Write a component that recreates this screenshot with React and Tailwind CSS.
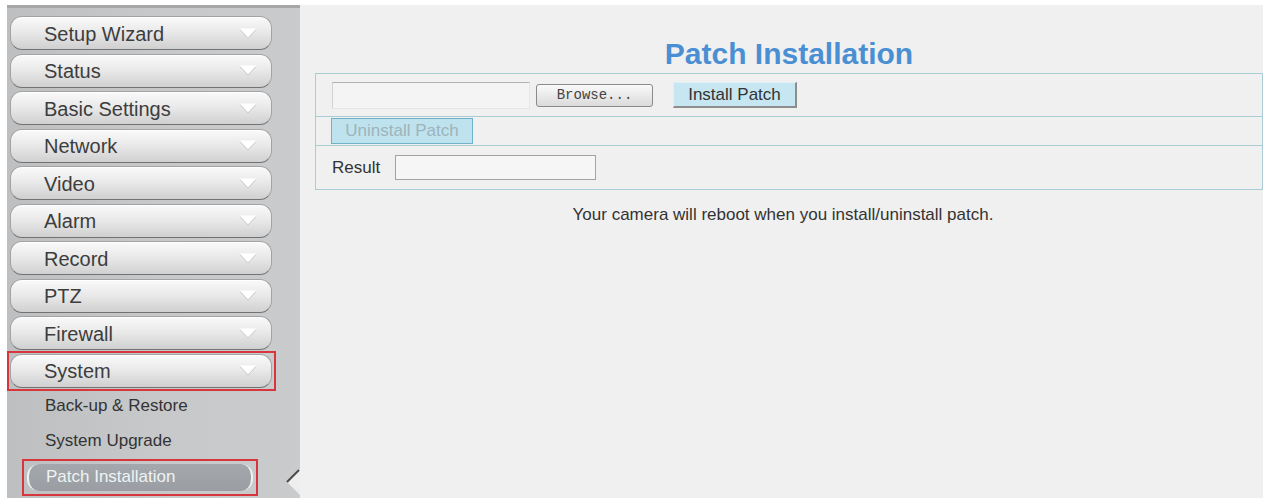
import React from "react";

const menu = [
  "Setup Wizard",
  "Status",
  "Basic Settings",
  "Network",
  "Video",
  "Alarm",
  "Record",
  "PTZ",
  "Firewall",
  "System",
];

function Arrow() {
  return (
    <svg width="18" height="11" viewBox="0 0 18 11" className="shrink-0">
      <polygon points="0.5,1.5 17.5,1.5 9,10.5" fill="#c4c4c4" />
      <polygon points="0.5,0.5 17.5,0.5 9,9.5" fill="#ffffff" />
    </svg>
  );
}

function MenuButton({ label }) {
  return (
    <div className="h-[34px] w-[262px] flex items-center justify-between pl-[33px] pr-[14px] rounded-[12px] border border-[#a3a3a3] border-b-[#727272] bg-gradient-to-b from-[#fafafa] via-[#e8e8e8] to-[#d0d0d0] shadow-[inset_0_1px_0_#ffffff] text-[20px] text-[#3d3d3d] leading-none">
      <span className="pt-[1px]">{label}</span>
      <Arrow />
    </div>
  );
}

export default function App() {
  return (
    <div className="w-[1271px] h-[504px] bg-white flex pt-[5px] pl-[7px] pb-[6px] font-['Liberation_Sans',Arial,sans-serif]">
      <aside className="relative w-[293px] h-[493px] border-t-[3px] border-[#a5a7a9] bg-gradient-to-r from-[#bdbfc1] via-[#c6c8ca] to-[#c9cbcd] pt-[8px] pl-[3px]">
        <div className="flex flex-col items-start gap-[3.5px]">
          {menu.map((m) =>
            m === "System" ? (
              <div
                key={m}
                className="ml-[-3px] mt-[-3px] mb-[-3px] pl-[1px] pr-[2px] py-[1px] border-2 border-[#d7373c]"
              >
                <MenuButton label={m} />
              </div>
            ) : (
              <MenuButton key={m} label={m} />
            )
          )}
        </div>
        <div className="flex flex-col">
          <div className="h-[35px] flex items-center pl-[35px] text-[17px] text-[#333] mt-[1px]">Back-up &amp; Restore</div>
          <div className="h-[35px] flex items-center pl-[35px] text-[17px] text-[#333]">System Upgrade</div>
          <div className="ml-[12px] mt-[0px] w-fit p-[3px] border-2 border-[#d7373c]">
            <div className="h-[27px] w-[226px] flex items-center pl-[17px] rounded-[12px] border-l-2 border-r-2 border-[#eef2f3] bg-gradient-to-b from-[#a4a8ac] to-[#9a9ea2] text-[17px] text-[#eef3f5]">
              Patch Installation
            </div>
          </div>
        </div>
        <svg width="14" height="32" viewBox="0 0 14 32" className="absolute right-0 top-[457px]">
          <polygon points="1,17 14,4 14,30" fill="#eeeeee" />
          <line x1="1" y1="17" x2="13" y2="5" stroke="#4a4a4a" strokeWidth="2" />
        </svg>
      </aside>

      <main className="w-[963px] h-[493px] bg-[#f0f0f0] pl-[15px] pt-[31px]">
        <div className="flex flex-col">
          <h1 className="text-center text-[30px] leading-[36px] font-bold text-[#4a8fd3] mb-[1px]">Patch Installation</h1>
          <div className="border border-[#a9ccd5]">
            <div className="h-[43px] flex items-center pl-[16px] border-b border-[#a9ccd5]">
              <div className="w-[198px] h-[27px] border border-[#e6e6e6] border-t-[#b2b2b2] border-l-[#d2d2d2] bg-[#f4f4f4]" />
              <div className="ml-[6px] w-[117px] h-[23px] rounded-[3px] border border-[#8a8a8a] bg-gradient-to-b from-[#fafafa] to-[#dadada] flex items-center justify-center font-['Liberation_Mono',monospace] text-[14px] text-[#444]">
                Browse...
              </div>
              <div className="ml-[20px] w-[124px] h-[26px] border border-[#dff0f6] border-r-2 border-b-2 border-r-[#8d8d8d] border-b-[#8d8d8d] bg-[#c6e6f2] flex items-center justify-center text-[17px] text-[#333]">
                Install Patch
              </div>
            </div>
            <div className="h-[29px] flex items-center pl-[15px] border-b border-[#a9ccd5]">
              <div className="w-[142px] h-[26px] border border-[#6fb2c6] bg-[#bfe3ee] flex items-center justify-center text-[17px] text-[#9db3bc]">
                Uninstall Patch
              </div>
            </div>
            <div className="h-[43px] flex items-center pl-[16px]">
              <span className="text-[17px] text-[#333]">Result</span>
              <div className="ml-[15px] w-[201px] h-[25px] border border-[#a3a3a3] bg-[#f6f6f6]" />
            </div>
          </div>
          <p className="text-center text-[17px] leading-[20px] text-[#333] mt-[15px] pr-[12px]">
            Your camera will reboot when you install/uninstall patch.
          </p>
        </div>
      </main>
    </div>
  );
}
